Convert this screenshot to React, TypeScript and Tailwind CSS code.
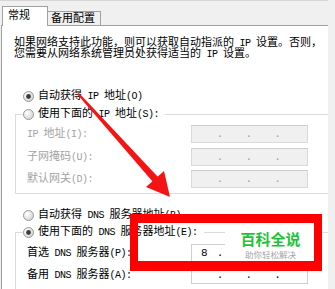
import React from "react";

function Mix({ s }: { s: string }) {
  const parts = s.split(/([\x00-\x7F]+)/).filter((p) => p.length > 0);
  return (
    <>
      {parts.map((p, i) =>
        /^[\x00-\x7F]+$/.test(p) ? (
          <span key={i} className="text-[10px] tracking-[-0.5px] whitespace-pre">
            {p}
          </span>
        ) : (
          <span key={i}>{p}</span>
        )
      )}
    </>
  );
}

function Radio({ checked }: { checked: boolean }) {
  return (
    <svg width="11" height="11" viewBox="0 0 11 11" className="shrink-0">
      <defs>
        <radialGradient id={checked ? "rgc" : "rgu"} cx="0.35" cy="0.35" r="0.7">
          <stop offset="0" stopColor="#ffffff" />
          <stop offset="1" stopColor="#d4d4d4" />
        </radialGradient>
      </defs>
      <circle cx="5.5" cy="5.5" r="5" fill={`url(#${checked ? "rgc" : "rgu"})`} stroke="#9a9a9a" strokeWidth="1" />
      {checked ? <circle cx="5.5" cy="5.5" r="2.4" fill="#3c3c3c" /> : null}
    </svg>
  );
}

function RadioRow({ checked, label, mask }: { checked: boolean; label: string; mask?: boolean }) {
  return (
    <div className={`flex items-center h-[14px] ${mask ? "bg-white self-start pr-[6px]" : ""}`}>
      <Radio checked={checked} />
      <span className="ml-[4px] whitespace-nowrap leading-[14px]">
        <Mix s={label} />
      </span>
    </div>
  );
}

function IpBox({ enabled, first, hiddenFrom }: { enabled: boolean; first?: string; hiddenFrom?: number }) {
  return (
    <div
      className={`w-[117px] h-[18px] border flex items-end pb-[1px] ${
        enabled ? "bg-white border-[#cfcfcf]" : "bg-[#f0f0f0] border-[#dadada] border-t-[#cdcdcd]"
      }`}
    >
      {[0, 1, 2, 3].map((i) => (
        <div key={i} className="w-[29px] flex items-end justify-between leading-[13px] text-[11px]">
          <span className="flex-1 text-center text-black">{i === 0 && first ? first : ""}</span>
          {i < 3 && (hiddenFrom === undefined || i < hiddenFrom) ? (
            <span className={`w-[4px] ${enabled ? "text-black" : "text-[#a0a0a0]"}`}>.</span>
          ) : (
            <span className="w-[4px]" />
          )}
        </div>
      ))}
    </div>
  );
}

function FieldRow({
  label,
  enabled,
  first,
  hiddenFrom,
}: {
  label: string;
  enabled: boolean;
  first?: string;
  hiddenFrom?: number;
}) {
  return (
    <div className="flex items-center h-[18px] pl-[11px]">
      <span className={`w-[164px] whitespace-nowrap ${enabled ? "text-black" : "text-[#a3a3a3]"}`}>
        <Mix s={label} />
      </span>
      <IpBox enabled={enabled} first={first} hiddenFrom={hiddenFrom} />
    </div>
  );
}

export default function App() {
  return (
    <div className="relative w-[335px] h-[289px] overflow-hidden bg-[#f0f0f0] flex text-[11px] text-black font-['Liberation_Mono','Noto_Sans_CJK_SC',monospace]">
      <div className="w-[328px] h-full flex flex-col">
        {/* tabs */}
        <div className="h-[25px] shrink-0 border-t border-[#d6d6d6] flex items-end pl-[2px] relative z-10">
          <div className="w-[46px] h-[20px] -mb-px bg-white border-l border-t border-r border-[#a0a0a0] flex items-start pl-[5px] pt-[3px] leading-[12px]">
            常规
          </div>
          <div className="w-[53px] h-[14px] bg-[#f0f0f0] border-t border-r border-[#a0a0a0] flex items-center pl-[3px] leading-[12px]">
            备用配置
          </div>
        </div>
        {/* panel */}
        <div className="flex-1 bg-white border-t border-l border-[#a0a0a0] ml-px overflow-hidden flex flex-col">
          <p className="pl-[12px] pt-[12px] leading-[11px] whitespace-nowrap">
            <Mix s="如果网络支持此功能，则可以获取自动指派的 IP 设置。否则，" />
            <br />
            <Mix s="您需要从网络系统管理员处获得适当的 IP 设置。" />
          </p>
          <div className="mt-[29px] pl-[21px]">
            <RadioRow checked={true} label="自动获得 IP 地址(O)" />
          </div>
          <div className="mt-[11px] ml-[13px] w-[400px] h-[80px] border-l border-t border-b border-[#dcdcdc] flex flex-col shrink-0">
            <div className="-mt-[8px] ml-[7px] flex">
              <RadioRow checked={false} label="使用下面的 IP 地址(S):" mask />
            </div>
            <div className="mt-[4px] flex flex-col">
              <FieldRow label="IP 地址(I):" enabled={false} />
              <div className="mt-[5px]">
                <FieldRow label="子网掩码(U):" enabled={false} />
              </div>
              <div className="mt-[4px]">
                <FieldRow label="默认网关(D):" enabled={false} />
              </div>
            </div>
          </div>
          <div className="mt-[14px] pl-[21px]">
            <RadioRow checked={false} label="自动获得 DNS 服务器地址(B)" />
          </div>
          <div className="mt-[10px] ml-[13px] w-[400px] h-[80px] border-l border-t border-[#dcdcdc] flex flex-col shrink-0">
            <div className="-mt-[8px] ml-[7px] flex">
              <RadioRow checked={true} label="使用下面的 DNS 服务器地址(E):" mask />
            </div>
            <div className="mt-[5px] flex flex-col">
              <FieldRow label="首选 DNS 服务器(P):" enabled={true} first="8" hiddenFrom={1} />
              <div className="mt-[4px]">
                <FieldRow label="备用 DNS 服务器(A):" enabled={true} />
              </div>
            </div>
          </div>
        </div>
      </div>
      <div className="flex-1 bg-[#f0f0f0]" />

      {/* red arrow overlay */}
      <svg className="absolute left-0 top-0 pointer-events-none" width="335" height="289" viewBox="0 0 335 289">
        <polygon points="77,94 79,93 158,177 153,182" fill="#f41414" />
        <polygon points="146,187 164,171 170,197" fill="#f41414" />
      </svg>

      {/* watermark */}
      <div className="absolute left-[225px] top-[223px] w-[90px] h-[38px] bg-white flex flex-col items-center pt-[7px] pl-[1px]">
        <span className="text-[15px] leading-[17px] font-bold text-[#1ec337] font-['Noto_Sans_CJK_SC',sans-serif]">百科全说</span>
        <span className="mt-[2px] text-[8.5px] leading-[10px] text-[#a5a5a5] font-['Noto_Sans_CJK_SC',sans-serif]">助你轻松解决</span>
      </div>
      {/* red rectangle */}
      <div className="absolute left-[130px] top-[214px] w-[192px] h-[57px] border-t-[9px] border-l-[8px] border-r-[8px] border-b-[10px] border-[#ff0000] pointer-events-none" />
    </div>
  );
}
